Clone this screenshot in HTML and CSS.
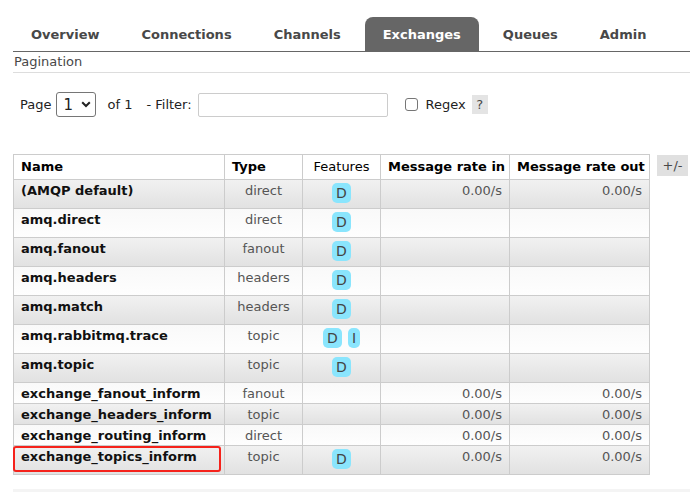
FILE: index.html
```html
<!DOCTYPE html>
<html>
<head>
<meta charset="utf-8">
<link rel="stylesheet" href="styles.css">
</head>
<body>
<div class="page">
  <ul class="tabs">
    <li class="tab">Overview</li>
    <li class="tab">Connections</li>
    <li class="tab">Channels</li>
    <li class="tab active">Exchanges</li>
    <li class="tab">Queues</li>
    <li class="tab">Admin</li>
  </ul>
  <div class="section-title">Pagination</div>
  <div class="pager">
    <span class="lbl">Page</span>
    <span class="select"><span class="sel-val">1</span>
      <svg class="chev" width="10" height="7" viewBox="0 0 10 7"><path d="M1.2 1.2 L5 5 L8.8 1.2" fill="none" stroke="#222" stroke-width="2"/></svg>
    </span>
    <span class="of">of 1</span>
    <span class="lbl filter">- Filter:</span>
    <span class="input"></span>
    <span class="checkbox"></span>
    <span class="lbl regex">Regex</span>
    <span class="help">?</span>
  </div>
  <div class="table-wrap">
    <table class="list">
      <thead>
        <tr>
          <th class="c-name">Name</th>
          <th class="c-type">Type</th>
          <th class="c-feat plain">Features</th>
          <th class="c-in">Message rate in</th>
          <th class="c-out">Message rate out</th>
        </tr>
      </thead>
      <tbody>
        <tr class="alt1"><td class="name">(AMQP default)</td><td class="type">direct</td><td class="feat"><span class="badge">D</span></td><td class="rate">0.00/s</td><td class="rate">0.00/s</td></tr>
        <tr class="alt2"><td class="name">amq.direct</td><td class="type">direct</td><td class="feat"><span class="badge">D</span></td><td class="rate"></td><td class="rate"></td></tr>
        <tr class="alt1"><td class="name">amq.fanout</td><td class="type">fanout</td><td class="feat"><span class="badge">D</span></td><td class="rate"></td><td class="rate"></td></tr>
        <tr class="alt2"><td class="name">amq.headers</td><td class="type">headers</td><td class="feat"><span class="badge">D</span></td><td class="rate"></td><td class="rate"></td></tr>
        <tr class="alt1"><td class="name">amq.match</td><td class="type">headers</td><td class="feat"><span class="badge">D</span></td><td class="rate"></td><td class="rate"></td></tr>
        <tr class="alt2"><td class="name">amq.rabbitmq.trace</td><td class="type">topic</td><td class="feat"><span class="badge">D</span> <span class="badge">I</span></td><td class="rate"></td><td class="rate"></td></tr>
        <tr class="alt1"><td class="name">amq.topic</td><td class="type">topic</td><td class="feat"><span class="badge">D</span></td><td class="rate"></td><td class="rate"></td></tr>
        <tr class="alt2"><td class="name">exchange_fanout_inform</td><td class="type">fanout</td><td class="feat"></td><td class="rate">0.00/s</td><td class="rate">0.00/s</td></tr>
        <tr class="alt1"><td class="name">exchange_headers_inform</td><td class="type">topic</td><td class="feat"></td><td class="rate">0.00/s</td><td class="rate">0.00/s</td></tr>
        <tr class="alt2"><td class="name">exchange_routing_inform</td><td class="type">direct</td><td class="feat"></td><td class="rate">0.00/s</td><td class="rate">0.00/s</td></tr>
        <tr class="alt1"><td class="name marked">exchange_topics_inform<span class="highlight"></span></td><td class="type">topic</td><td class="feat"><span class="badge">D</span></td><td class="rate">0.00/s</td><td class="rate">0.00/s</td></tr>
      </tbody>
    </table>
    <span class="toggle">+/-</span>
  </div>
  <div class="next-section"></div>
</div>
</body>
</html>
```
FILE: styles.css
```css
html, body {
  margin: 0;
  padding: 0;
  background: #fff;
}
body {
  font-family: "DejaVu Sans", Verdana, sans-serif;
  font-size: 13px;
  color: #484848;
}
.page {
  padding: 17px 0 0 13px;
}
.tabs {
  list-style: none;
  margin: 0;
  padding: 0;
  display: flex;
  gap: 6px;
  height: 34px;
  border-bottom: 1px solid #666;
}
.tab {
  padding: 0 18px;
  font-weight: bold;
  font-size: 13px;
  line-height: 35px;
  color: #484848;
  border-radius: 8px 8px 0 0;
}
.tab.active {
  background: #666;
  color: #fff;
}
.section-title {
  font-size: 13px;
  line-height: 20px;
  height: 20px;
  padding-left: 1px;
  border-bottom: 1px solid #ddd;
  color: #484848;
}
.pager {
  display: flex;
  align-items: center;
  height: 25px;
  margin-top: 19px;
  padding-left: 7px;
  font-size: 13px;
  color: #222;
}
.select {
  display: inline-flex;
  align-items: center;
  box-sizing: border-box;
  width: 40px;
  height: 25px;
  margin-left: 5px;
  border: 1px solid #767676;
  border-radius: 3px;
  padding-left: 6px;
  gap: 8px;
  font-size: 15px;
}
.sel-val { color: #222; }
.of { margin-left: 11px; }
.filter { margin-left: 14px; }
.input {
  box-sizing: border-box;
  width: 190px;
  height: 24px;
  margin-left: 6px;
  border: 1px solid #ccc;
  border-radius: 2px;
}
.checkbox {
  box-sizing: border-box;
  width: 13px;
  height: 13px;
  margin-left: 17px;
  border: 1px solid #767676;
  border-radius: 3px;
  background: #fff;
}
.regex { margin-left: 8px; }
.help {
  margin-left: 6px;
  width: 16px;
  height: 19px;
  line-height: 19px;
  text-align: center;
  background: #e4e4e4;
  color: #484848;
}
.table-wrap {
  display: flex;
  align-items: flex-start;
  gap: 7px;
  margin-top: 37px;
}
table.list {
  border-collapse: collapse;
  table-layout: fixed;
  width: 636px;
  font-size: 13px;
}
table.list th, table.list td {
  border: 1px solid #ccc;
  padding: 3px 7px 2px;
  line-height: 15px;
  white-space: nowrap;
  vertical-align: top;
  overflow: visible;
}
table.list th {
  background: #fff;
  color: #000;
  font-weight: bold;
  text-align: left;
  padding-top: 4px;
  padding-bottom: 4px;
  line-height: 16px;
  box-sizing: border-box;
}
table.list th.plain { font-weight: normal; text-align: center; padding: 4px 4px; }
.c-name { width: 211px; }
.c-type { width: 78px; }
.c-feat { width: 78px; }
.c-in { width: 129px; }
.c-out { width: 140px; }
tr.alt1 { background: linear-gradient(#f1f1f1, #e1e1e1); }
tr.alt2 { background: linear-gradient(#f9f9f9, #fefefe); }
td.name {
  font-weight: bold;
  color: #111;
}
td.name.marked { position: relative; }
td.type {
  text-align: center;
  color: #555;
}
td.feat {
  text-align: center;
  padding: 3px 2px 2px;
}
td.rate {
  text-align: right;
  color: #555;
  padding-right: 6px;
}
.badge {
  display: inline-block;
  vertical-align: top;
  height: 20px;
  line-height: 20px;
  margin-bottom: 3px;
  padding: 0 4px;
  border-radius: 5px;
  background: #8ae5fd;
  color: #444;
  font-size: 14px;
}
.badge + .badge { margin-left: 2px; }
.highlight {
  position: absolute;
  left: -1px;
  top: 0;
  width: 208px;
  height: 26px;
  border: 2px solid #f5221b;
  border-radius: 3px;
  box-sizing: border-box;
}
.toggle {
  display: inline-block;
  margin-top: 1px;
  width: 31px;
  height: 21px;
  line-height: 21px;
  text-align: center;
  background: #e0e0e0;
  color: #484848;
  font-size: 13px;
}
.next-section {
  margin-top: 14px;
  height: 10px;
  background: #f4f4f4;
}
```
